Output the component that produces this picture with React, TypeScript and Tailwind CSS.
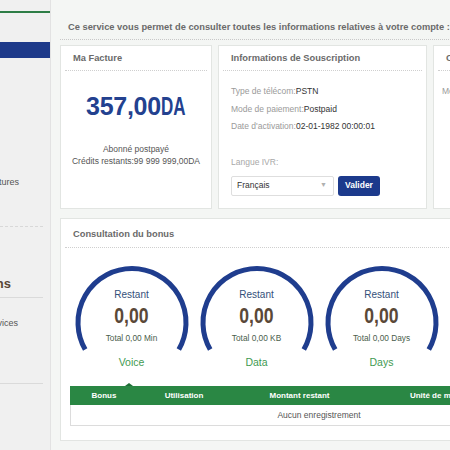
import React from "react";

function Gauge({ label, total }: { label: string; total: string }) {
  return (
    <div className="w-[125px] flex flex-col items-center">
      <div className="relative w-[116px] h-[90px]">
        <svg className="absolute inset-0" width="116" height="90" viewBox="0 0 116 90">
          <path
            d="M11.2 83.5 A54 54 0 1 1 104.8 83.5"
            fill="none"
            stroke="#1f3d8e"
            strokeWidth="5"
          />
        </svg>
        <div className="relative flex flex-col items-center pt-[22px]">
          <div className="text-[10px] leading-[14px] text-[#33507a]">Restant</div>
          <div className="text-[22px] leading-[26px] font-bold text-[#5a4838] scale-x-[0.8] mt-[1px]">0,00</div>
          <div className="text-[8.3px] leading-[12px] text-[#4a5e4c] mt-[3px]">{total}</div>
        </div>
      </div>
      <div className="text-[10.5px] leading-[14px] text-[#3f9a52] -mt-[1px]">{label}</div>
    </div>
  );
}

export default function App() {
  return (
    <div className="w-[450px] h-[450px] overflow-hidden flex bg-[#f4f6f4] font-['Liberation_Sans',Arial,sans-serif]">
      {/* Sidebar */}
      <div className="w-[51px] shrink-0 h-full bg-[#f0f0f0] border-r border-[#e2e2e2] flex flex-col">
        <div className="h-[11px]" />
        <div className="h-[2px] bg-[#2e7d46]" />
        <div className="h-[29px]" />
        <div className="h-[16px] bg-[#1e3a8a]" />
        <div className="h-[118px]" />
        <div className="w-[19px] flex justify-end whitespace-nowrap text-[9px] leading-[12px] text-[#555]">Factures</div>
        <div className="h-[38px]" />
        <div className="w-[43px] border-t border-dashed border-[#d8d8d8]" />
        <div className="h-[49px]" />
        <div className="w-[11px] flex justify-end whitespace-nowrap text-[13px] leading-[16px] font-bold text-[#5a4636]">Options</div>
        <div className="h-[5px]" />
        <div className="w-[43px] border-t border-[#dadada]" />
        <div className="h-[19px]" />
        <div className="w-[18px] flex justify-end whitespace-nowrap text-[9px] leading-[12px] text-[#555]">Services</div>
        <div className="h-[54px]" />
        <div className="w-[43px] border-t border-[#dadada]" />
      </div>

      {/* Main */}
      <div className="w-[640px] shrink-0 pl-[9px] flex flex-col">
        <div className="h-[40px] border-b border-dotted border-[#c8c8c8] flex items-end pb-[6px] pl-[8px]">
          <div className="whitespace-nowrap text-[9.3px] leading-[12px] font-bold text-[#6a6a6a]">
            Ce service vous permet de consulter toutes les informations relatives à votre compte : solde, bonus et factures
          </div>
        </div>

        {/* Cards row */}
        <div className="flex gap-[6px] mt-[5px]">
          {/* Ma Facture */}
          <div className="w-[152px] h-[164px] bg-white border border-[#e2e5e2] px-[4px] flex flex-col">
            <div className="h-[25px] border-b border-dotted border-[#cfcfcf] flex items-center pl-[8px] pt-[1px]">
              <span className="text-[9.3px] font-bold text-[#6a6a6a]">Ma Facture</span>
            </div>
            <div className="flex justify-center mt-[22px] text-[#23418f] font-bold">
              <span className="text-[25px] leading-[26px] tracking-[-0.3px]">357,00</span>
              <span className="text-[25px] leading-[26px] inline-block scale-x-[0.68] origin-left -mr-[11px]">DA</span>
            </div>
            <div className="mt-[24px] text-center text-[8.5px] leading-[12px] text-[#555]">
              <div>Abonné postpayé</div>
              <div>Crédits restants:99 999 999,00DA</div>
            </div>
          </div>

          {/* Informations de Souscription */}
          <div className="w-[209px] h-[164px] bg-white border border-[#e2e5e2] px-[4px] flex flex-col">
            <div className="h-[25px] border-b border-dotted border-[#cfcfcf] flex items-center pl-[8px] pt-[1px]">
              <span className="text-[9.3px] font-bold text-[#6a6a6a]">Informations de Souscription</span>
            </div>
            <div className="pl-[8px] mt-[12px] text-[8.5px] leading-[17.5px]">
              <div><span className="text-[#9a9a9a]">Type de télécom:</span><span className="text-[#333]">PSTN</span></div>
              <div><span className="text-[#9a9a9a]">Mode de paiement:</span><span className="text-[#333]">Postpaid</span></div>
              <div><span className="text-[#9a9a9a]">Date d'activation:</span><span className="text-[#333]">02-01-1982 00:00:01</span></div>
            </div>
            <div className="pl-[8px] mt-[20px] text-[8.5px] leading-[12px] text-[#a8a8a8]">Langue IVR:</div>
            <div className="pl-[8px] mt-[8px] flex gap-[4px]">
              <div className="w-[103px] h-[20px] border border-[#dedede] rounded-[2px] flex items-center justify-between pl-[5px] pr-[6px]">
                <span className="text-[8.5px] text-[#333]">Français</span>
                <span className="text-[7px] text-[#b0b0b0]">▼</span>
              </div>
              <div className="w-[42px] h-[20px] bg-[#1c3a8c] rounded-[3px] flex items-center justify-center">
                <span className="text-[8.5px] font-bold text-white">Valider</span>
              </div>
            </div>
          </div>

          {/* Third card */}
          <div className="w-[200px] h-[164px] bg-white border border-[#e2e5e2] px-[4px] flex flex-col">
            <div className="h-[25px] border-b border-dotted border-[#cfcfcf] flex items-center pl-[8px] pt-[1px]">
              <span className="text-[9.3px] font-bold text-[#6a6a6a]">Consommation</span>
            </div>
            <div className="pl-[4px] mt-[12px] text-[8.5px] leading-[17.5px] text-[#9a9a9a]">Montant:</div>
          </div>
        </div>

        {/* Bonus section */}
        <div className="mt-[9px] w-[560px] h-[223px] bg-white border border-[#e2e5e2] px-[4px] flex flex-col">
          <div className="h-[29px] border-b border-dotted border-[#cfcfcf] flex items-center pl-[8px] pt-[4px]">
            <span className="text-[9.3px] font-bold text-[#6a6a6a]">Consultation du bonus</span>
          </div>
          <div className="flex pl-[4px] mt-[18px]">
            <Gauge label="Voice" total="Total 0,00 Min" />
            <Gauge label="Data" total="Total 0,00 KB" />
            <Gauge label="Days" total="Total 0,00 Days" />
          </div>
          <div className="ml-[5px] mt-[14px] flex flex-col">
            <div className="h-[3px] pl-[55px]">
              <div className="w-0 h-0 border-l-[4px] border-r-[4px] border-b-[3px] border-l-transparent border-r-transparent border-b-[#1f6e36]" />
            </div>
            <div className="h-[19px] bg-[#2a8744] flex items-center text-[8px] font-bold text-white">
              <div className="w-[68px] text-center">Bonus</div>
              <div className="w-[92px] text-center">Utilisation</div>
              <div className="w-[139px] text-center">Montant restant</div>
              <div className="w-[144px] text-center">Unité de mesure</div>
            </div>
            <div className="h-[21px] border border-t-0 border-[#dcdcdc] w-[498px] flex items-center justify-center text-[8.5px] text-[#555]">
              Aucun enregistrement
            </div>
          </div>
        </div>
      </div>
    </div>
  );
}
